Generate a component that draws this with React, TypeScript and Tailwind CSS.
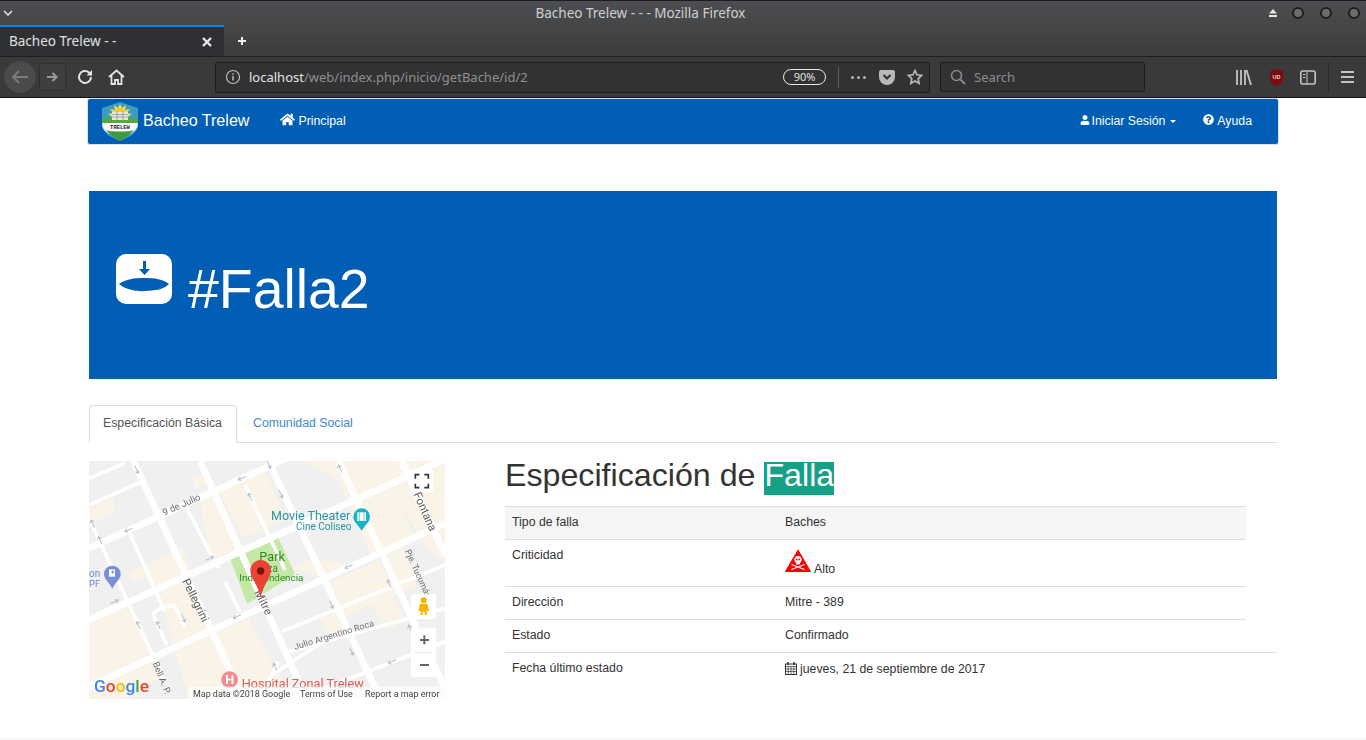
import { FaHome, FaQuestionCircle, FaUser } from "react-icons/fa"

const specRows = [
  { label: "Dirección", value: "Mitre - 389" },
  { label: "Estado", value: "Confirmado" },
]

// x, y and angle of the one-way arrows painted on the map streets
const mapArrows = [
  [155, 45, 65], [552, 30, 65], [765, 40, -115], [470, 70, 156], [495, 125, -115], [588, 118, 65],
  [130, 225, 156], [22, 205, -115], [45, 255, -115], [375, 310, -24], [90, 440, -24], [295, 490, 65],
  [220, 510, -115], [160, 510, -115], [455, 485, 156], [790, 335, 156], [740, 450, 65], [912, 385, -115],
  [800, 590, 65], [920, 620, 156], [570, 635, -115], [975, 520, -115],
]

function Chevron() {
  return (
    <svg width="10" height="6" viewBox="0 0 10 6" fill="none" stroke="#e0e0e0" strokeWidth="1.5">
      <path d="M1 1l4 4 4-4" />
    </svg>
  )
}

function WindowDot() {
  return <span className="h-[12px] w-[12px] rounded-full border-2 border-[#1f1f1f] bg-[#6a6b6c]" />
}

function TitleBar() {
  return (
    <div className="flex h-[25px] shrink-0 items-center border-t border-t-[#1d1d1d] pl-[3px] pr-[6px]">
      <Chevron />
      <div className="flex-1 text-center text-[13.500px] text-[#cfcfcf]">Bacheo Trelew - - - Mozilla Firefox</div>
      <svg width="10" height="8" viewBox="0 0 10 8" fill="#e6e6e6" className="mr-[14px]">
        <path d="M5 0l4 4.500H1zM1 6h8v2H1z" />
      </svg>
      <div className="flex gap-[16px]">
        <WindowDot />
        <WindowDot />
        <WindowDot />
      </div>
    </div>
  )
}

function TabBar() {
  return (
    <div className="flex h-[32px] shrink-0 items-stretch border-b border-b-[#1f1f1f]">
      <div className="flex w-[224px] items-center justify-between border-t-2 border-t-[#0a84ff] bg-[#2f3033] pl-[9px] pr-[12px] text-[13.500px] text-[#e0e0e0]">
        <span>Bacheo Trelew - -</span>
        <svg width="10" height="10" viewBox="0 0 10 10" stroke="#e8e8e8" strokeWidth="2.400">
          <path d="M1 1l8 8M9 1l-8 8" />
        </svg>
      </div>
      <div className="flex items-center pl-[14px]">
        <svg width="8" height="8" viewBox="0 0 8 8" stroke="#f0f0f0" strokeWidth="2">
          <path d="M4 0v8M0 4h8" />
        </svg>
      </div>
    </div>
  )
}

function NavIcons() {
  return (
    <div className="flex w-[215px] shrink-0 items-center pl-[4px]">
      <div className="flex h-[32px] w-[32px] items-center justify-center rounded-full border border-[#4b4b4b] bg-[#4a4b4c]">
        <svg width="18" height="16" viewBox="0 0 18 16" fill="none" stroke="#7b7c7d" strokeWidth="2">
          <path d="M17 8H2M8 2L2 8l6 6" />
        </svg>
      </div>
      <div className="ml-[3px] flex h-[28px] w-[27px] items-center justify-center rounded-[3px] border border-[#2f2f2f] bg-[#3e3f40]">
        <svg width="11" height="10" viewBox="0 0 11 10" fill="none" stroke="#989898" strokeWidth="2.200">
          <path d="M0 5h9M5.500 1l4 4-4 4" />
        </svg>
      </div>
      <svg width="16" height="16" viewBox="0 0 16 16" fill="none" stroke="#e3e3e3" strokeWidth="2" className="ml-[11px]">
        <path d="M14 8a6 6 0 1 1-2-4.500L14.500 6" />
        <path d="M15 1v5.500H9.500" fill="#e3e3e3" stroke="none" />
      </svg>
      <svg width="17" height="16" viewBox="0 0 17 16" fill="none" stroke="#e3e3e3" strokeWidth="1.800" className="ml-[15px]">
        <path d="M1 8l7.500-6.500L16 8M3.500 6.500V15h3.500v-4h3v4h3.500V6.500" />
      </svg>
    </div>
  )
}

function UrlBar() {
  return (
    <div className="flex h-[31px] w-[715px] shrink-0 items-center rounded-[2px] border border-[#1e1e1e] bg-[#323234] pl-[9px] pr-[6px] font-['Noto_Sans',sans-serif] text-[13px]">
      <svg width="16" height="16" viewBox="0 0 16 16" fill="none" stroke="#bdbdbd" strokeWidth="1.200">
        <circle cx="8" cy="8" r="6.500" />
        <path d="M8 7v4.500M8 4.300v1.400" strokeWidth="1.500" />
      </svg>
      <span className="ml-[8px] pt-[2px] text-[#e4e4e4]">localhost</span>
      <span className="pt-[2px] text-[#8f8f90]">/web/index.php/inicio/getBache/id/2</span>
      <span className="ml-auto flex h-[16px] w-[43px] items-center justify-center rounded-full border border-[#e8e8e8] text-[11px] text-[#e0e0e0]">90%</span>
      <span className="ml-[12px] h-[21px] w-px bg-[#5c5c5c]" />
      <span className="ml-[12px] flex gap-[3px]">
        <i className="h-[3px] w-[3px] rounded-full bg-[#b5b5b5]" />
        <i className="h-[3px] w-[3px] rounded-full bg-[#b5b5b5]" />
        <i className="h-[3px] w-[3px] rounded-full bg-[#b5b5b5]" />
      </span>
      <svg width="16" height="15" viewBox="0 0 16 15" className="ml-[13px]">
        <path d="M2 0h12a2 2 0 0 1 2 2v5a8 8 0 0 1-16 0V2a2 2 0 0 1 2-2z" fill="#b9b9b9" />
        <path d="M4.500 5L8 8.500 11.500 5" fill="none" stroke="#323234" strokeWidth="2.200" />
      </svg>
      <svg width="16" height="16" viewBox="0 0 16 16" fill="none" stroke="#b9b9b9" strokeWidth="1.700" className="ml-[12px]">
        <path d="M8 1.500l2 4.300 4.700.6-3.500 3.200.9 4.700L8 12l-4.100 2.300.9-4.700L1.300 6.400 6 5.800z" />
      </svg>
    </div>
  )
}

function SearchBar() {
  return (
    <div className="ml-[10px] flex h-[30px] w-[205px] shrink-0 items-center rounded-[2px] border border-[#1e1e1e] bg-[#323234] pl-[9px] font-['Noto_Sans',sans-serif] text-[13px] text-[#8c8c8d]">
      <svg width="16" height="16" viewBox="0 0 16 16" fill="none" stroke="#8a8a8a" strokeWidth="1.600">
        <circle cx="6.500" cy="6.500" r="5" />
        <path d="M10.500 10.500L15 15" strokeWidth="2" />
      </svg>
      <span className="ml-[8px] pt-[2px]">Search</span>
    </div>
  )
}

function ToolIcons() {
  return (
    <div className="flex flex-1 items-center pl-[91px]">
      <svg width="16" height="15" viewBox="0 0 16 15" stroke="#c4c4c4" strokeWidth="1.800" fill="none">
        <path d="M1 0v15M5 0v15M9 0v15M10.500 0l4.500 15" />
      </svg>
      <svg width="13" height="17" viewBox="0 0 13 17" className="ml-[18px]">
        <path d="M6.500 0l6.500 2.200v7c0 4-3 6.500-6.500 7.800C3 15.700 0 13.200 0 9.200v-7z" fill="#7c0a0e" />
        <text x="6.500" y="9.500" textAnchor="middle" fontSize="5.500" fontWeight="700" fill="#f0d0d0" fontFamily="Liberation Sans">UD</text>
      </svg>
      <svg width="16" height="15" viewBox="0 0 16 15" fill="none" stroke="#c4c4c4" strokeWidth="1.600" className="ml-[17px]">
        <rect x="0.800" y="1" width="14.400" height="13" rx="2" />
        <path d="M7 1v13M3 4.500h2.500M3 7.500h2.500" strokeWidth="1" />
      </svg>
      <span className="ml-[12px] h-[30px] w-px bg-[#2b2b2b]" />
      <div className="ml-[12px] flex flex-col gap-[3px]">
        <i className="h-[2px] w-[13px] bg-[#c4c4c4]" />
        <i className="h-[2px] w-[13px] bg-[#c4c4c4]" />
        <i className="h-[2px] w-[13px] bg-[#c4c4c4]" />
      </div>
    </div>
  )
}

function ShieldLogo() {
  return (
    <svg width="38" height="40" viewBox="0 0 38 40">
      <path d="M19 1l18 6v17c0 8-10 13-18 16C11 37 1 32 1 24V7z" fill="#3c9bc4" />
      <path d="M19 3l2 4 4-3-1 5 5-1-3 4 5 1-4 3h-16l-4-3 5-1-3-4 5 1-1-5 4 3z" fill="#f5dc4a" />
      <circle cx="19" cy="13" r="6" fill="#f2c832" />
      <path d="M1.200 17h35.600v6H1.200z" fill="#59a83c" />
      <path d="M11 11h16v8H11z" fill="#e9e9e3" />
      <path d="M11 13.500h16M11 16h16M16 11v8M22 11v8" stroke="#8b8b80" strokeWidth="0.700" />
      <path d="M1.300 22h35.400v3c-1 3-4 6-7 8H8c-3-2-6-5-6.700-8z" fill="#fff" />
      <path d="M5 29c4 2 24 2 28 0-3 4-9 8-14 11-5-3-11-7-14-11z" fill="#3f9a3f" />
      <text x="19" y="27.500" textAnchor="middle" fontSize="5.500" fontWeight="700" fill="#222" fontFamily="Liberation Mono">TRELEW</text>
    </svg>
  )
}

function Navbar() {
  return (
    <nav className="mx-[87px] flex h-[47px] items-center rounded-[3px] border border-[#d7e3f0] bg-[#005eb4] pb-[2px] pl-[13px] text-white">
      <ShieldLogo />
      <span className="ml-[4px] text-[16.100px]">Bacheo Trelew</span>
      <FaHome className="ml-[31px] mb-[3px] text-[15px]" />
      <span className="ml-[3px] pt-px text-[12.300px]">Principal</span>
      <FaUser className="ml-auto mb-[2px] text-[10px]" />
      <span className="ml-[2px] pt-px text-[12.300px]">Iniciar Sesión</span>
      <i className="ml-[5px] mt-[1px] h-0 w-0 border-x-[3px] border-t-[3px] border-x-transparent border-t-white" />
      <FaQuestionCircle className="ml-[27px] mb-[2px] text-[11px]" />
      <span className="ml-[3px] mr-[26px] pt-px text-[12.300px]">Ayuda</span>
    </nav>
  )
}

function Hero() {
  return (
    <section className="mt-[46px] flex h-[188px] items-center bg-[#005eb4] pl-[27px] text-white">
      <svg width="56" height="50" viewBox="0 0 56 50" className="mb-[13px]">
        <rect width="56" height="50" rx="10" fill="#fff" />
        <path d="M27 7h3v8h4l-5.500 6-5.500-6h4z" fill="#005eb4" />
        <path d="M3 30c7-5 15-6 25-6 11 0 19 1 25 6-4 4-10 6-14 6-7 1-16 2-23 0-5-1-10-3-13-6z" fill="#005eb4" />
      </svg>
      <h1 className="ml-[16px] mt-[10px] text-[55.400px] leading-none">#Falla2</h1>
    </section>
  )
}

function Tabs() {
  return (
    <div className="mt-[26px] flex h-[38px] border-b border-b-[#dddddd] text-[12.300px]">
      <div className="h-[38px] w-[148px] rounded-t-[4px] border border-[#dddddd] border-b-white bg-white pl-[13px] pt-[8px] text-[#555555]">Especificación Básica</div>
      <div className="pl-[16px] pt-[9px] text-[#3f88c8]">Comunidad Social</div>
    </div>
  )
}

// coordinates are the ones read off the 3x crop, viewBox maps them back to 356x238
function MapView() {
  return (
    <div className="relative h-[238px] w-[356px] shrink-0 overflow-hidden">
      <svg width="356" height="238" viewBox="12 18 1068 714" fontFamily="Roboto, sans-serif" className="block blur-[0.3px]">
        <rect x="12" y="18" width="1068" height="714" fill="#f0f0f0" />
        <g fill="#f9f4e7">
          <path d="M660 18h230l100 230-130 60-100-230z" />
          <path d="M880 18h200v300l-60-40z" />
          <path d="M395 100l140-60 70 150-130 60z" />
          <path d="M345 130l40-15 70 165-80 40z" />
          <path d="M12 480l110-50 120 230-130 72H12z" />
          <path d="M130 350l160-70 40 90-120 55-30-60-40 15z" />
          <path d="M220 400l80-35 150 300-80 67h-60z" />
          <path d="M380 540l110-50 120 220H450z" />
          <path d="M620 340l60-30 120 20-70 40z" />
          <path d="M720 390l160-75 60 100-170 75z" />
          <path d="M890 300l60-30 50 120-60 30z" />
          <path d="M700 490l60-30 40 70-60 30z" />
          <path d="M860 440l60-25 40 80-60 30z" />
          <path d="M12 160l70-30 10 40-80 40z" />
          <path d="M320 70l50-20 15 30-55 20z" />
        </g>
        <path d="M476 282l100-42 54 118-100 62z" fill="#c5e8a6" />
        <path d="M432 302l24-10 72 130-42 24z" fill="#c5e8a6" />
        <g fill="none" stroke="#ffffff">
          <g strokeWidth="20">
            <path d="M12 280L700 -34" />
            <path d="M12 495L1080 13" />
            <path d="M12 695L1080 205" />
            <path d="M145 18L460 700" />
            <path d="M345 18L650 700" />
            <path d="M550 18L900 760" />
            <path d="M760 18L1080 700" />
            <path d="M950 18L1080 300" />
          </g>
          <g strokeWidth="11">
            <path d="M12 150L170 80" />
            <path d="M12 70L120 25" />
            <path d="M12 190L240 680" />
            <path d="M130 225L240 470" />
            <path d="M300 150L400 340" />
            <path d="M480 90L600 345" />
            <path d="M590 530L1080 330" />
            <path d="M560 660L760 530" />
            <path d="M610 590L1080 460" />
            <path d="M600 745L1080 560" />
            <path d="M205 480c0-15 50-35 65-25l30 60" />
            <path d="M420 380l45 90" />
            <path d="M205 480l40 90" />
            <path d="M520 740l60-120" />
          </g>
        </g>
        {mapArrows.map(([x, y, angle]) => (
          <path
            key={`${x}-${y}`}
            transform={`translate(${x} ${y}) rotate(${angle})`}
            d="M-14 0H9M3 -6l8 6-8 6"
            fill="none"
            stroke="#b4bfcd"
            strokeWidth="3"
          />
        ))}
        <text transform="translate(238 182) rotate(-24)" fontSize="28" fill="#6b6b6b">9 de Julio</text>
        <text transform="translate(291 378) rotate(64)" fontSize="34" fill="#5f5f5f">Pellegrini</text>
        <text transform="translate(508 412) rotate(64)" fontSize="34" fill="#5f5f5f">Mitre</text>
        <text transform="translate(985 118) rotate(66)" fontSize="34" fill="#5f5f5f">Fontana</text>
        <text transform="translate(960 288) rotate(66)" fontSize="26" fill="#6b6b6b">Pje. Tucumán</text>
        <text transform="translate(630 585) rotate(-17)" fontSize="27" fill="#777777">Julio Argentino Roca</text>
        <text transform="translate(203 625) rotate(68)" fontSize="27" fill="#6b6b6b">Bell A. P.</text>
        <text x="558" y="196" fontSize="37.500" fill="#2a95a3">Movie Theater</text>
        <text x="633" y="224" fontSize="30" fill="#2a95a3">Cine Coliseo</text>
        <path d="M830 160a25 25 0 0 1 25 25c0 16-17 26-25 43-8-17-25-27-25-43a25 25 0 0 1 25-25z" fill="#17b3c6" />
        <rect x="817" y="172" width="26" height="26" fill="#fff" />
        <path d="M823 172v26M837 172v26" stroke="#17b3c6" strokeWidth="2" />
        <text x="523" y="318" fontSize="38" fill="#2f8a22">Park</text>
        <text x="505" y="350" fontSize="30" fill="#2f8a22">Plaza</text>
        <text x="463" y="378" fontSize="29.500" fill="#2f8a22">Independencia</text>
        <text x="12" y="366" fontSize="30" fill="#7986cb">on</text>
        <text x="12" y="396" fontSize="28" fill="#7986cb">PF</text>
        <path d="M82 332a25 25 0 0 1 25 25c0 17-17 25-25 44-8-19-25-27-25-44a25 25 0 0 1 25-25z" fill="#7c8dd8" />
        <path d="M72 343h18v22H72z" fill="#fff" />
        <path d="M80 347h6v8h-6z" fill="#7c8dd8" />
        <circle cx="434" cy="674" r="25" fill="#f28b8b" />
        <text x="434" y="688" fontSize="38" fontWeight="700" textAnchor="middle" fill="#fff">H</text>
        <text x="470" y="700" fontSize="38" fill="#d9605a">Hospital Zonal Trelew</text>
        <path d="M527 315c-17 0-31 13-31 31 0 26 24 40 31 84 7-44 31-58 31-84 0-18-14-31-31-31z" fill="#ea4335" />
        <circle cx="527" cy="348" r="11" fill="#7a1410" />
        <rect x="310" y="695" width="770" height="37" fill="#ffffff" fillOpacity="0.7" />
        <g fontSize="26.800" fill="#444444">
          <text x="324" y="726">Map data ©2018 Google</text>
          <text x="645" y="726">Terms of Use</text>
          <text x="840" y="726">Report a map error</text>
        </g>
        <text x="27" y="712" fontSize="52" fontWeight="500">
          <tspan fill="#4285f4">G</tspan>
          <tspan fill="#ea4335">o</tspan>
          <tspan fill="#fbbc05">o</tspan>
          <tspan fill="#4285f4">g</tspan>
          <tspan fill="#34a853">l</tspan>
          <tspan fill="#ea4335">e</tspan>
        </text>
        <rect x="978" y="45" width="66" height="66" fill="#fff" />
        <path d="M991 71V59h12M1018 59h12v12M1030 86v12h-12M1003 98h-12V86" fill="none" stroke="#333333" strokeWidth="5" />
        <rect x="978" y="418" width="75" height="74" rx="3" fill="#fff" />
        <circle cx="1016" cy="436" r="9" fill="#f5b400" />
        <path d="M1005 446h22l5 22h-7v12h-6v-10h-6v10h-6v-12h-7z" fill="#f5b400" />
        <rect x="978" y="518" width="75" height="147" rx="3" fill="#fff" />
        <path d="M990 592h52" stroke="#e6e6e6" strokeWidth="2" />
        <path d="M1018 541v27M1005 555h27M1005 630h27" stroke="#666666" strokeWidth="6" />
      </svg>
    </div>
  )
}

function SkullSign() {
  return (
    <svg width="26" height="24" viewBox="0 0 26 24" className="mt-[3px] shrink-0">
      <path d="M13 1L25.500 22.500H.500z" fill="#ff0000" stroke="#ff0000" strokeWidth="1" strokeLinejoin="round" />
      <circle cx="13" cy="10.500" r="3.600" fill="#fff" />
      <rect x="11" y="12.500" width="4" height="3" fill="#fff" />
      <circle cx="11.700" cy="10.500" r="0.900" fill="#ff0000" />
      <circle cx="14.300" cy="10.500" r="0.900" fill="#ff0000" />
      <path d="M6.500 15.500l13 5M19.500 15.500l-13 5" stroke="#fff" strokeWidth="1.300" />
    </svg>
  )
}

function CalendarIcon() {
  return (
    <svg width="12" height="13" viewBox="0 0 12 13" fill="none" stroke="#333333" strokeWidth="1" className="mr-[3px] mb-[2px]">
      <rect x="0.500" y="2" width="11" height="10.500" />
      <path d="M0.500 4.500h11M0.500 7h11M0.500 9.500h11M3.200 4.500v8M6 4.500v8M8.800 4.500v8" strokeWidth="0.700" />
      <path d="M3 0v3M9 0v3" strokeWidth="1.500" />
    </svg>
  )
}

function SpecTable() {
  return (
    <div className="flex-1">
      <h2 className="h-[45px] pt-px text-[32.200px] leading-[26px] text-[#333333]">
        Especificación de <span className="inline-block h-[33px] bg-[#16a085] text-white">Falla</span>
      </h2>
      <div className="text-[12.300px] leading-[18px] text-[#333333]">
        <div className="w-[741px]">
          <div className="grid grid-cols-[273px_1fr] border-y border-[#dddddd] bg-[#f5f5f5] pb-[8px] pl-[7px] pt-[6px]">
            <span>Tipo de falla</span>
            <span>Baches</span>
          </div>
          <div className="grid h-[47px] grid-cols-[273px_1fr] border-b border-[#dddddd] pl-[7px] pt-[6px]">
            <span>Criticidad</span>
            <span className="flex h-[38px] items-start">
              <SkullSign />
              <span className="ml-[3px] mt-[14px]">Alto</span>
            </span>
          </div>
          {specRows.map((row) => (
            <div key={row.label} className="grid h-[33px] grid-cols-[273px_1fr] border-b border-[#dddddd] pl-[7px] pt-[6px] last:h-[32px] last:border-b-0">
              <span>{row.label}</span>
              <span>{row.value}</span>
            </div>
          ))}
        </div>
        <div className="grid grid-cols-[273px_1fr] border-t border-[#dddddd] pl-[7px] pt-[6px]">
          <span>Fecha último estado</span>
          <span className="flex items-center pt-px">
            <CalendarIcon />
            jueves, 21 de septiembre de 2017
          </span>
        </div>
      </div>
    </div>
  )
}

export default function App() {
  return (
    <div className="flex h-[740px] flex-col overflow-hidden bg-white font-['Liberation_Sans',Arial,sans-serif]">
      <header className="h-[98px] shrink-0 bg-gradient-to-b from-[#4d4e51] via-[#3d3f3f] to-[#383a3a] font-['Noto_Sans',sans-serif]">
        <TitleBar />
        <TabBar />
        <div className="flex h-[41px] items-center border-b border-b-[#141414] bg-[#3a3a3b]">
          <NavIcons />
          <UrlBar />
          <SearchBar />
          <ToolIcons />
        </div>
      </header>
      <Navbar />
      <main className="mx-[89px]">
        <Hero />
        <Tabs />
        <div className="mt-[18px] flex gap-[60px]">
          <MapView />
          <SpecTable />
        </div>
      </main>
      <div className="mt-auto h-[2px] bg-[#f7f7f7]" />
    </div>
  )
}
